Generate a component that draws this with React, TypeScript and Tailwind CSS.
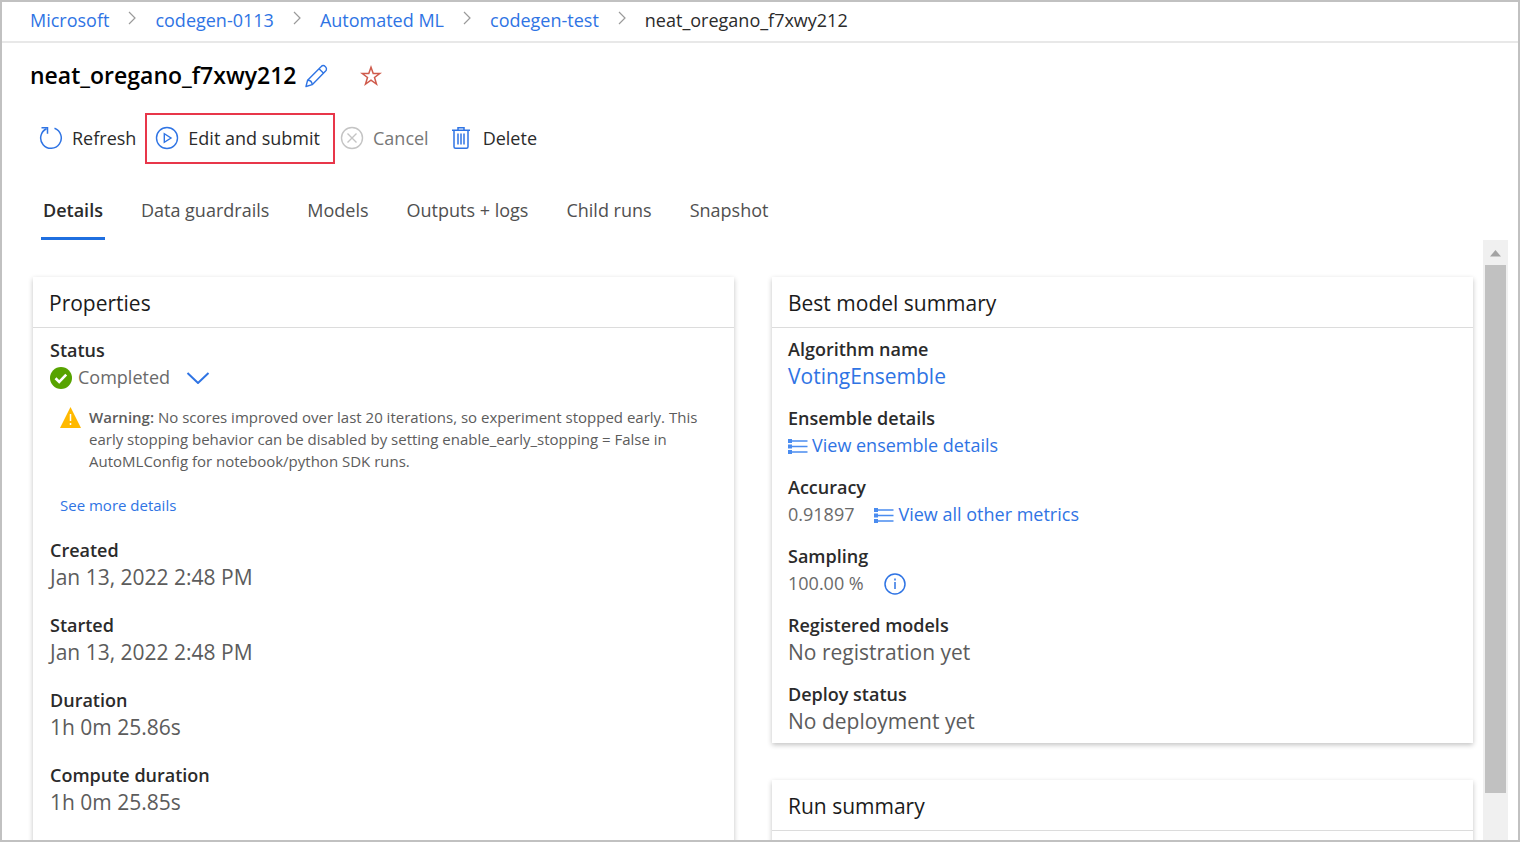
import type { ReactNode } from "react";

const crumbs = ["Microsoft", "codegen-0113", "Automated ML", "codegen-test"];
const tabs = ["Details", "Data guardrails", "Models", "Outputs + logs", "Child runs", "Snapshot"];

function CrumbChevron() {
  return (
    <svg className="mr-[19px] ml-[19px] -mt-1 h-4 w-2 shrink-0" viewBox="0 0 8 16" fill="none" stroke="#9a9a9a" strokeWidth="1.2" aria-hidden="true">
      <path d="M1 2l6 6-6 6" />
    </svg>
  );
}

function PencilIcon() {
  return (
    <svg className="size-6" viewBox="0 0 24 24" fill="none" stroke="#2f74e4" strokeWidth="1.4" strokeLinejoin="round" aria-hidden="true">
      <path d="M2 22.5l1.6-6.3L17 2.8a3 3 0 0 1 4.600 4.300L8.200 20.700z" />
      <path d="M15 4.800l4.600 4.500M3.600 16.200c2.600 0 4.500 1.800 4.600 4.500" />
    </svg>
  );
}

function StarIcon() {
  return (
    <svg className="size-[22px]" viewBox="0 0 22 22" fill="none" stroke="#cf5b4c" strokeWidth="1.5" aria-hidden="true">
      <path d="M11 2.300l2.200 6.200h6.600l-5.300 4 2 6.500-5.500-3.900-5.500 3.900 2-6.500-5.300-4h6.600z" />
    </svg>
  );
}

function RefreshIcon() {
  return (
    <svg className="size-6" viewBox="0 0 24 24" fill="none" stroke="#2f74e4" strokeWidth="1.5" aria-hidden="true">
      <path d="M15.500 2.300A10.300 10.300 0 1 1 7.500 2.700" />
      <path d="M2.500 1.800h6v6" />
    </svg>
  );
}

function PlayIcon() {
  return (
    <svg className="size-6" viewBox="0 0 24 24" fill="none" stroke="#2f74e4" strokeWidth="1.4" aria-hidden="true">
      <circle cx="12" cy="12" r="10.500" />
      <path d="M9.300 7.700v8.600l6.700-4.300z" />
    </svg>
  );
}

function CancelIcon() {
  return (
    <svg className="size-6" viewBox="0 0 24 24" fill="none" stroke="#c4c4c4" strokeWidth="1.400" aria-hidden="true">
      <circle cx="12" cy="12" r="10.500" />
      <path d="M7.500 7.500l9 9m0-9l-9 9" />
    </svg>
  );
}

function TrashIcon() {
  return (
    <svg className="h-6 w-5" viewBox="0 0 20 24" fill="none" stroke="#2f74e4" strokeWidth="1.500" aria-hidden="true">
      <path d="M1 4.200h18M7 4V1.700h6V4M3 4.200v16.600q0 1.500 1.500 1.500h11q1.500 0 1.500-1.500V4.200" />
      <path d="M7 7.500v11M10 7.500v11M13 7.500v11" />
    </svg>
  );
}

function ListIcon() {
  return (
    <svg className="h-4 w-5 shrink-0" viewBox="0 0 20 16" fill="none" stroke="#4a8cf0" aria-hidden="true">
      <path d="M3 3h16.500M3 8.500h16.500M3 14h16.500" strokeWidth="1.400" />
      <path d="M0 3h4M0 8.500h4M0 14h4" strokeWidth="3.800" />
    </svg>
  );
}

function Card({ title, className = "", children }: { title: string; className?: string; children?: ReactNode }) {
  return (
    <section className={`bg-white shadow-[0_2px_5px_rgba(0,0,0,0.24)] ${className}`}>
      <h2 className="border-b border-[#dcdcdc] px-4 pt-[13px] pb-[11px] text-[21px] leading-[26px] font-medium text-[#1b1b1b]">{title}</h2>
      {children}
    </section>
  );
}

function Field({ label, children }: { label: string; children: ReactNode }) {
  return (
    <div>
      <dt className="text-lg leading-[27px] font-semibold text-[#2b2b2b]">{label}</dt>
      <dd className="flex items-center text-[21px] leading-[27px] text-[#5c5c5c]">{children}</dd>
    </div>
  );
}

export default function App() {
  return (
    <div className="flex h-screen flex-col overflow-hidden border-2 border-[#c1c1c1] bg-white font-['Open_Sans','Noto_Sans',sans-serif] text-[#2b2b2b]">
      <nav aria-label="Breadcrumb" className="flex h-[41px] shrink-0 items-center border-b-2 border-[#e8e8e8] px-7 pb-1 text-lg whitespace-nowrap">
        {crumbs.map((c) => (
          <span key={c} className="flex items-center">
            <a href="#" className="text-[#2f74e4]">{c}</a>
            <CrumbChevron />
          </span>
        ))}
        <span aria-current="page">neat_oregano_f7xwy212</span>
      </nav>

      <header className="shrink-0 pl-7">
        <div className="flex h-[65px] items-center">
          <h1 className="text-[23px] font-semibold text-black">neat_oregano_f7xwy212</h1>
          <button type="button" aria-label="Edit name" className="ml-2"><PencilIcon /></button>
          <button type="button" aria-label="Add to favorites" className="ml-8"><StarIcon /></button>
        </div>
        <div className="flex h-[60px] items-center text-lg whitespace-nowrap">
          <button type="button" className="ml-[9px] flex items-center gap-[9px]"><RefreshIcon />Refresh</button>
          <button type="button" className="ml-[9px] flex h-[51px] items-center gap-[9px] border-2 border-[#e8364a] pr-[13px] pl-2"><PlayIcon />Edit and submit</button>
          <button type="button" disabled className="ml-[5px] flex items-center gap-[9px] text-[#777]"><CancelIcon />Cancel</button>
          <button type="button" className="ml-[22px] flex items-center gap-3"><TrashIcon />Delete</button>
        </div>
        <div role="tablist" className="mt-3 ml-[11px] flex gap-[34px] text-lg whitespace-nowrap">
          {tabs.map((t, i) => (
            <button
              key={t}
              type="button"
              role="tab"
              aria-selected={i === 0}
              className={`h-[60px] border-b-[3px] px-0.5 pt-0.5 ${i === 0 ? "border-[#1f6fe0] font-semibold text-[#2b2b2b]" : "border-transparent text-[#505050]"}`}
            >
              {t}
            </button>
          ))}
        </div>
      </header>

      <div className="flex min-h-0 flex-1 pr-2.5">
        <main className="grid min-h-0 flex-1 grid-cols-2 gap-[38px] overflow-hidden pt-[37px] pr-2.5 pl-[31px]">
          <Card title="Properties" className="min-h-[700px]">
            <dl className="flex flex-col gap-[21px] px-[17px] pt-[9px]">
              <div>
                <Field label="Status">
                  <svg className="size-[22px]" viewBox="0 0 22 22" aria-hidden="true">
                    <circle cx="11" cy="11" r="11" fill="#57a300" />
                    <path d="M5.500 11.300l3.700 3.600 7-7.300" fill="none" stroke="#fff" strokeWidth="2.600" />
                  </svg>
                  <span className="ml-1.5 text-lg leading-[27px] text-[#6a6a6a]">Completed</span>
                  <button type="button" aria-label="Show status details" className="ml-4">
                    <svg className="h-3 w-6" viewBox="0 0 24 12" fill="none" stroke="#2f74e4" strokeWidth="2" aria-hidden="true">
                      <path d="M1.500 1l10.500 10L22.500 1" />
                    </svg>
                  </button>
                </Field>
                <div className="mt-[15px] flex pl-2.5">
                  <svg className="mt-px mr-2 h-[21px] w-[21px] shrink-0" viewBox="0 0 21 21" aria-hidden="true">
                    <path d="M10.500 0L21 21H0z" fill="#ffb900" />
                    <path d="M10.500 7v7M10.500 16v2" stroke="#fff" strokeWidth="1.500" />
                  </svg>
                  <p className="text-[15px] leading-[22px] text-[#5c5c5c]">
                    <strong className="font-semibold">Warning:</strong> No scores improved over last 20 iterations, so experiment stopped early. This early stopping behavior can be disabled by setting enable_early_stopping = False in AutoMLConfig for notebook/python SDK runs.
                  </p>
                </div>
                <a href="#" className="mt-[22px] ml-2.5 block w-fit text-[15px] leading-[22px] text-[#2f74e4]">See more details</a>
              </div>
              <Field label="Created">Jan 13, 2022 2:48 PM</Field>
              <Field label="Started">Jan 13, 2022 2:48 PM</Field>
              <Field label="Duration">1h 0m 25.86s</Field>
              <Field label="Compute duration">1h 0m 25.85s</Field>
            </dl>
          </Card>

          <div className="flex flex-col gap-[37px]">
            <Card title="Best model summary">
              <dl className="flex flex-col gap-[15px] px-4 py-2">
                <Field label="Algorithm name"><a href="#" className="text-[#2f74e4]">VotingEnsemble</a></Field>
                <Field label="Ensemble details">
                  <a href="#" className="flex items-center gap-1 text-lg leading-[27px] text-[#2f74e4]"><ListIcon />View ensemble details</a>
                </Field>
                <Field label="Accuracy">
                  <span className="text-lg leading-[27px] text-[#6a6a6a]">0.91897</span>
                  <a href="#" className="ml-5 flex items-center gap-1 text-lg leading-[27px] text-[#2f74e4]"><ListIcon />View all other metrics</a>
                </Field>
                <Field label="Sampling">
                  <span className="text-lg leading-[27px] text-[#6a6a6a]">100.00 %</span>
                  <button type="button" aria-label="About sampling" className="ml-5">
                    <svg className="size-[22px]" viewBox="0 0 22 22" fill="none" stroke="#2f74e4" strokeWidth="1.500" aria-hidden="true">
                      <circle cx="11" cy="11" r="10" />
                      <path d="M11 9v7M11 5.500v2" />
                    </svg>
                  </button>
                </Field>
                <Field label="Registered models">No registration yet</Field>
                <Field label="Deploy status">No deployment yet</Field>
              </dl>
            </Card>
            <Card title="Run summary" className="min-h-[200px]" />
          </div>
        </main>

        <div aria-hidden="true" className="flex w-[25px] shrink-0 flex-col bg-[#f0f0f0] px-0.5">
          <svg className="h-[25px] w-full shrink-0" viewBox="0 0 21 25">
            <path d="M10.500 10l5.500 6.500H5z" fill="#a3a3a3" />
          </svg>
          <div className="h-[92%] max-h-[528px] bg-[#c1c1c1]" />
        </div>
      </div>
    </div>
  );
}
